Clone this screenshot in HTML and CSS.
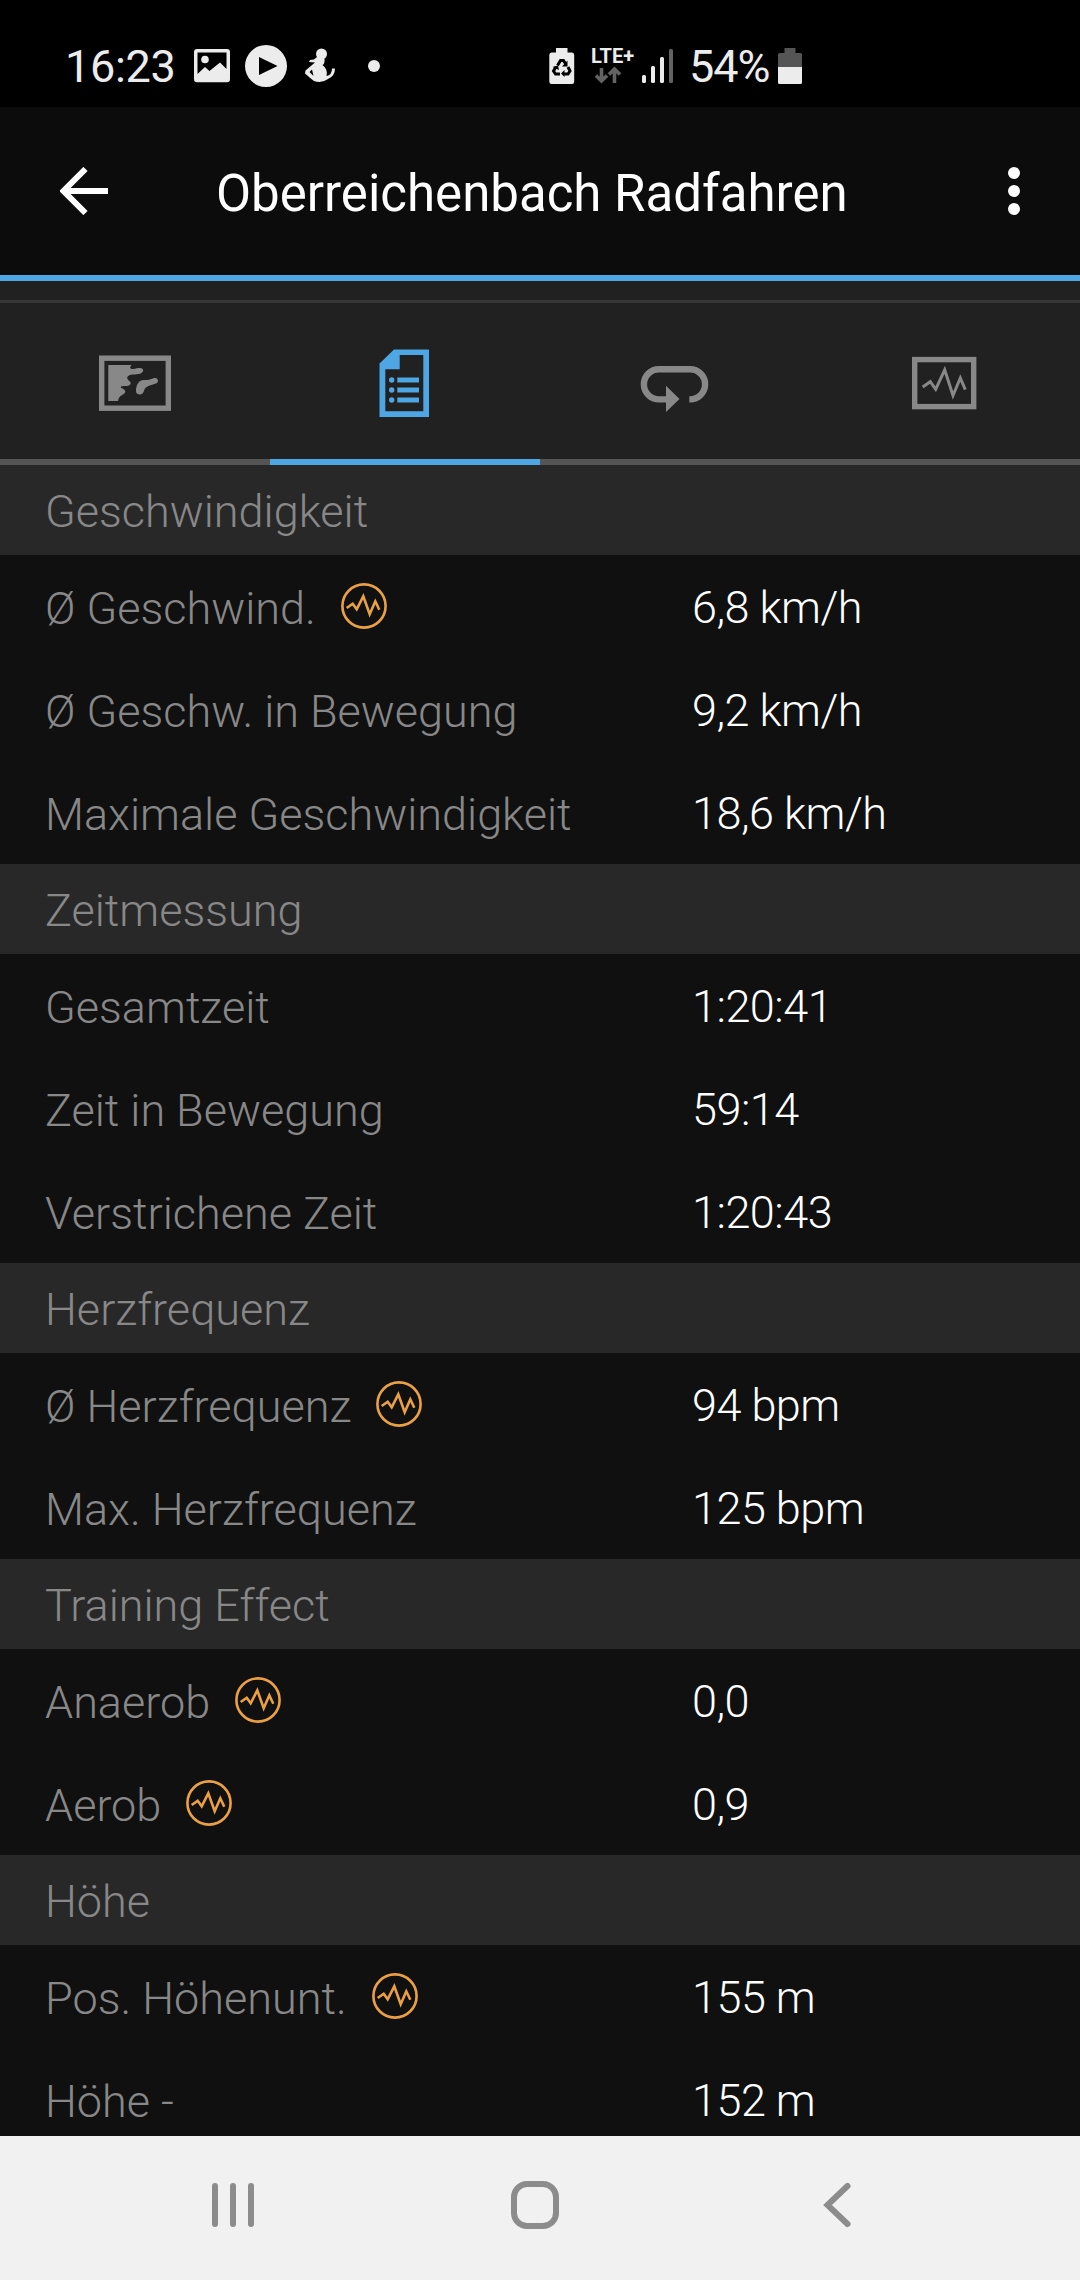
FILE: index.html
```
<!DOCTYPE html>
<html lang="de">
  <head>
    <meta charset="UTF-8" />
    <title>Oberreichenbach Radfahren</title>
    <link rel="stylesheet" href="styles.css">
  </head>
  <body>
    <svg class="defs" width="0" height="0">
      <symbol id="graph" viewBox="0 0 46 46">
        <circle cx="23" cy="23" r="21.6" />
        <path d="M5.7 25l6-4.3 4 5.6 6.6-13 6.4 18 5.6-13 4 8.4" />
      </symbol>
    </svg>

    <div class="status">
      <span class="time">16:23</span>
      <svg class="s-image" width="36" height="34" viewBox="0 0 36 34">
        <path fill-rule="evenodd" d="M3 0H33Q36 0 36 3V30Q36 33.300 33 33.300H3Q0 33.300 0 30V3Q0 0 3 0ZM3.500 3.500V25L11 18 15.500 22 26 13.500 32.500 20V3.500Z" />
        <circle cx="11" cy="10.500" r="3.800" />
      </svg>
      <svg class="s-play" width="42" height="42" viewBox="0 0 42 42">
        <path fill-rule="evenodd" d="M21 0a21 21 0 0 1 0 42a21 21 0 0 1 0-42ZM14 12V30L32.500 21Z" />
      </svg>
      <svg class="s-figure" width="32" height="36" viewBox="0 0 32 36">
        <circle cx="17.500" cy="6" r="5.500" />
        <path d="M13 9L20.500 11Q21 16 18.500 17Q24 21 22.500 28Q28 27 28 20.500L31 20.500Q31 28 24 31Q18 35.500 10 33Q6 30 1 25.500L1.500 22.500 11 14.500 5 14 6 12 10 11.500ZM5.500 24L9.500 28 8 21.500Z" />
      </svg>
      <svg class="s-dot" width="12" height="12" viewBox="0 0 12 12"><circle cx="6" cy="6" r="6" /></svg>

      <svg class="s-saver" width="26" height="36" viewBox="0 0 26 36">
        <path d="M7 0H18.500V4.500H23Q25.200 4.500 25.200 7V33.500Q25.200 36 23 36H2.500Q.3 36 .3 33.500V7Q.3 4.500 2.500 4.500H7Z" />
        <g fill="none" stroke="#000" stroke-width="3">
          <path d="M8.500 17.500L11.500 12.500H14.500L17 16.500" />
          <path d="M19 19L21 23 19 26H15" />
          <path d="M11 26H6.500L4.500 23 7 19" />
        </g>
        <path d="M18.500 12.500V18.500H13ZM15.500 22V29L12 25.500ZM3.500 19L9 17.500 10 22Z" fill="#000" />
      </svg>
      <div class="lte">
        <span>LTE+</span>
        <svg width="28" height="18" viewBox="0 0 28 18">
          <path d="M7.500 2V15M2 9.500l5.500 5.500 5.500-5.500M20.500 17V3M15 8.500L20.500 3l5.500 5.500" />
        </svg>
      </div>
      <svg class="s-signal" width="32" height="36" viewBox="0 0 32 36">
        <rect x="0" y="27" width="4" height="8" rx="1.500" />
        <rect x="9" y="18" width="4" height="17" rx="1.500" />
        <rect x="18" y="9" width="4" height="26" rx="1.500" />
        <rect x="27" y="1" width="4" height="34" rx="1.500" fill="#636363" />
      </svg>
      <span class="percent">54%</span>
      <svg class="s-battery" width="24" height="36" viewBox="0 0 24 36">
        <path d="M6.500 0H17.500V5H22.500Q24 5 24 6.500V19H0V6.500Q0 5 1.500 5H6.500Z" fill="#555" />
        <path d="M0 19H24V34.500Q24 36 22.500 36H1.500Q0 36 0 34.500Z" />
      </svg>
    </div>

    <div class="toolbar">
      <svg class="back" width="48" height="48" viewBox="0 0 48 48">
        <path d="M48 24H5M25.500 2L3.500 24l22 22" />
      </svg>
      <h1>Oberreichenbach Radfahren</h1>
      <svg class="more" width="12" height="48" viewBox="0 0 12 48">
        <circle cx="6" cy="6" r="6" />
        <circle cx="6" cy="24" r="6" />
        <circle cx="6" cy="42" r="6" />
      </svg>
    </div>

    <div class="strip"></div>

    <div class="tabs">
      <div class="tab">
        <svg width="90" height="90" viewBox="0 0 90 90">
          <rect class="line" x="11.700" y="22.200" width="66.600" height="50" stroke-width="5.400" />
          <path d="M18.300 29H41.700C39.500 31 39.500 33 43 33C46 32.500 48 32 50 32C54 32 54.500 36 50 37.700C46 39 39 37.500 37.300 41C36.500 44 41 45 40.700 47.500C40 51 34 49.500 31 50.500C29.500 52 34.500 52.500 35.300 55C36 59 29 58 28 65H18.300Z" />
          <path d="M46 55C46 50 48 44 54 44C60 44.500 62 42 65.500 42C68.500 42.500 69 46.500 66 47.500C62 49 57 50 55.500 52C53.500 54 54 58.500 50 58.500C47.500 58.500 46 57.500 46 55Z" />
        </svg>
      </div>
      <div class="tab active">
        <svg width="90" height="90" viewBox="0 0 90 90">
          <path fill-rule="evenodd" d="M34 13.500H69V81H19.500V27.500ZM39.700 19V33.300H25.300V75.200H63.300V19Z" />
          <circle cx="31.700" cy="44" r="2.700" />
          <circle cx="31.700" cy="54" r="2.700" />
          <circle cx="31.700" cy="64" r="2.700" />
          <path d="M37.300 41.500H59V46.500H37.300ZM37.300 51.500H59V56.500H37.300ZM37.300 61.500H59V66.500H37.300Z" />
        </svg>
      </div>
      <div class="tab">
        <svg width="90" height="90" viewBox="0 0 90 90">
          <path class="line" stroke-width="6.400" d="M59.300 63.400H60A15.100 15.100 0 0 0 60 33.200H29A15.100 15.100 0 0 0 29 63.400H38" />
          <path d="M36 49.700L49.500 63 36 76Z" />
        </svg>
      </div>
      <div class="tab">
        <svg width="90" height="90" viewBox="0 0 90 90">
          <rect class="line" x="14.700" y="23.600" width="59" height="47" stroke-width="5.400" />
          <path class="line" stroke-width="3" d="M22.700 51l7.600-5.300 5.400 7.600 9-19.500 8.300 25.700 7.300-17.500 5 11.700" />
        </svg>
      </div>
    </div>

    <div class="list">
      <h2>Geschwindigkeit</h2>
      <div class="row"><span class="label">Ø Geschwind.</span><svg class="graph"><use href="#graph" /></svg><span class="value">6,8 km/h</span></div>
      <div class="row"><span class="label">Ø Geschw. in Bewegung</span><span class="value">9,2 km/h</span></div>
      <div class="row"><span class="label">Maximale Geschwindigkeit</span><span class="value">18,6 km/h</span></div>

      <h2>Zeitmessung</h2>
      <div class="row"><span class="label">Gesamtzeit</span><span class="value">1:20:41</span></div>
      <div class="row"><span class="label">Zeit in Bewegung</span><span class="value">59:14</span></div>
      <div class="row"><span class="label">Verstrichene Zeit</span><span class="value">1:20:43</span></div>

      <h2>Herzfrequenz</h2>
      <div class="row"><span class="label">Ø Herzfrequenz</span><svg class="graph"><use href="#graph" /></svg><span class="value">94 bpm</span></div>
      <div class="row"><span class="label">Max. Herzfrequenz</span><span class="value">125 bpm</span></div>

      <h2>Training Effect</h2>
      <div class="row"><span class="label">Anaerob</span><svg class="graph"><use href="#graph" /></svg><span class="value">0,0</span></div>
      <div class="row"><span class="label">Aerob</span><svg class="graph"><use href="#graph" /></svg><span class="value">0,9</span></div>

      <h2>Höhe</h2>
      <div class="row"><span class="label">Pos. Höhenunt.</span><svg class="graph"><use href="#graph" /></svg><span class="value">155 m</span></div>
      <div class="row"><span class="label">Höhe -</span><span class="value">152 m</span></div>
    </div>

    <div class="navbar">
      <svg width="48" height="48" viewBox="0 0 48 48"><path d="M6 5V43M24 5V43M42 5V43" /></svg>
      <svg width="48" height="48" viewBox="0 0 48 48"><rect x="3" y="3" width="42" height="42" rx="13" /></svg>
      <svg width="48" height="48" viewBox="0 0 48 48"><path d="M34.500 5L14.500 24l20 19" /></svg>
    </div>
  </body>
</html>
```

FILE: styles.css
```
* {
  margin: 0;
  padding: 0;
  box-sizing: border-box;
}

body {
  display: flex;
  flex-direction: column;
  width: 1080px;
  height: 2280px;
  overflow: hidden;
  background: #101010;
  color: white;
  font-family: Roboto, sans-serif;
}

svg {
  display: block;
  flex: none;
}

.defs {
  position: absolute;
}

/* status bar */
.status {
  display: flex;
  align-items: center;
  flex: none;
  height: 107px;
  padding: 24px 0 0 65px;
  background: #000;
  color: #ececec;
  fill: #ececec;
  font-size: 45px;
  line-height: 52px;
  white-space: nowrap;
}

.time {
  width: 129px;
  padding-top: 3px;
  letter-spacing: -0.3px;
}

.s-play {
  margin-left: 15px;
}

.s-figure {
  margin-left: 17px;
}

.s-dot {
  margin-left: 32px;
}

.s-saver {
  margin-left: 169px;
}

.lte {
  width: 51px;
  margin-left: 16px;
  padding-bottom: 2px;
  font-size: 20px;
  font-weight: 700;
  line-height: 20px;
}

.lte svg {
  margin-left: 3px;
  fill: none;
  stroke: #636363;
  stroke-width: 3.6;
}

.percent {
  width: 89px;
  margin-left: 15px;
  padding-top: 3px;
  letter-spacing: -1px;
}

/* title */
.toolbar {
  display: flex;
  align-items: center;
  flex: none;
  height: 174px;
  padding: 0 60px;
  background: #0c0c0c;
  border-bottom: 6px solid #4fa6e5;
}

.back {
  fill: none;
  stroke: white;
  stroke-width: 6;
}

.toolbar h1 {
  width: 792px;
  margin-left: 108px;
  padding-top: 5px;
  font-size: 51px;
  font-weight: 400;
  white-space: nowrap;
}

.more {
  fill: white;
}

.strip {
  flex: none;
  height: 22px;
  background: #212121;
  border-bottom: 3px solid #373737;
}

/* tabs */
.tabs {
  display: flex;
  flex: none;
  height: 162px;
  background: #212121;
}

.tab {
  display: flex;
  justify-content: center;
  align-items: center;
  width: 270px;
  border-bottom: 6px solid #555;
  color: #888;
  fill: currentColor;
}

.tab.active {
  border-color: #4fa6e5;
  color: #4fa6e5;
}

.line {
  fill: none;
  stroke: currentColor;
}

/* stats */
.list {
  height: 1671px;
  overflow: hidden;
  font-size: 45px;
  font-weight: 300;
  white-space: nowrap;
}

.list h2 {
  height: 90px;
  padding-left: 45px;
  background: #282828;
  color: #888;
  font-size: 45px;
  font-weight: 300;
  line-height: 94px;
}

.row {
  display: flex;
  align-items: center;
  height: 103px;
  padding-left: 45px;
}

.label {
  color: #888;
  padding-top: 3px;
}

.graph {
  width: 46px;
  height: 46px;
  margin: 0 0 2px 25px;
  fill: none;
  stroke: #eaa043;
  stroke-width: 2.6;
}

.value {
  width: 388px;
  margin-left: auto;
  padding-top: 1px;
  letter-spacing: -0.5px;
}

/* system buttons */
.navbar {
  display: flex;
  justify-content: center;
  align-items: center;
  gap: 254px;
  flex: none;
  height: 144px;
  padding-right: 10px;
  padding-bottom: 6px;
  background: #f1f1f1;
  fill: none;
  stroke: #8c8c8c;
  stroke-width: 6;
  stroke-linecap: round;
}
```
